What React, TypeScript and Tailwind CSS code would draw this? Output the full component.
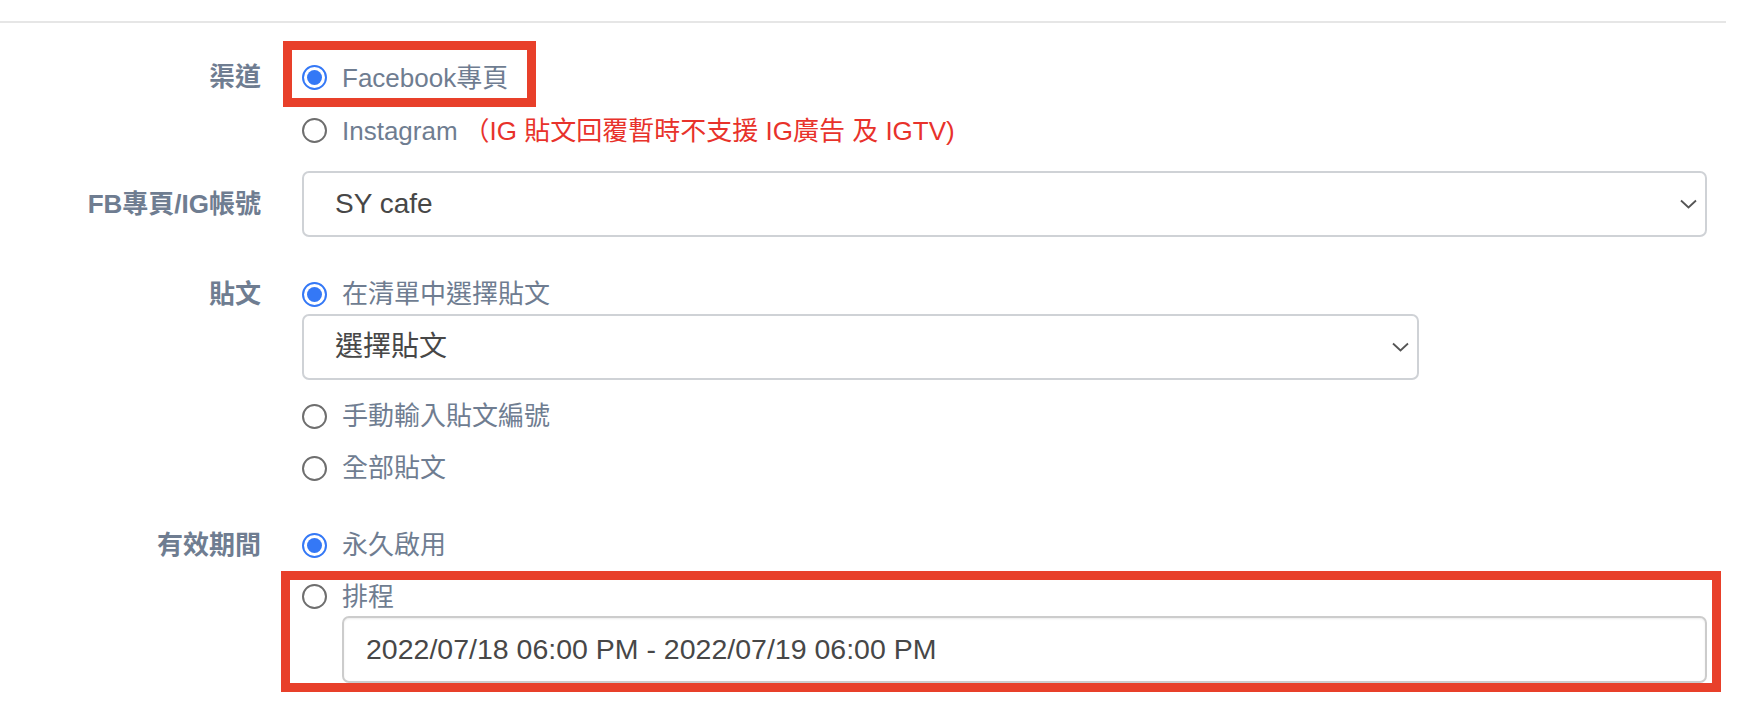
import React from 'react';

const FONT = { fontFamily: '"Liberation Sans", "Noto Sans CJK TC", sans-serif' };

const Radio: React.FC<{ checked?: boolean }> = ({ checked }) =>
  checked ? (
    <span className="flex items-center justify-center w-[25px] h-[25px] rounded-full border-[2px] border-[#3478f6] bg-white shrink-0">
      <span className="w-[15px] h-[15px] rounded-full bg-[#3478f6]" />
    </span>
  ) : (
    <span className="w-[25px] h-[25px] rounded-full border-[2px] border-[#6e6e6e] bg-white shrink-0" />
  );

const Option: React.FC<{ checked?: boolean; h: string; children: React.ReactNode }> = ({ checked, h, children }) => (
  <div className={`flex items-center gap-[15px] ${h}`}>
    <Radio checked={checked} />
    <span className="text-[26px] text-[#6f7d91] leading-none whitespace-nowrap">{children}</span>
  </div>
);

const Chevron = () => (
  <svg width="17" height="10" viewBox="0 0 17 10" fill="none" className="shrink-0">
    <path d="M1 1.5L8.5 8.5L16 1.5" stroke="#555" strokeWidth="1.8" />
  </svg>
);

const Select: React.FC<{ value: string; w: string }> = ({ value, w }) => (
  <div className={`flex items-center justify-between ${w} h-[66px] border-[2px] border-[#cfd2d6] rounded-[7px] bg-white pl-[31px] pr-[8px]`}>
    <span className="text-[28px] text-[#474747] leading-none">{value}</span>
    <Chevron />
  </div>
);

const Label: React.FC<{ h: string; children: React.ReactNode }> = ({ h, children }) => (
  <div className={`w-[261px] shrink-0 flex items-center justify-end ${h} text-[26px] font-bold text-[#6f7d91] whitespace-nowrap`}>
    {children}
  </div>
);

export default function App() {
  return (
    <div className="w-[1740px] h-[704px] bg-white overflow-hidden" style={FONT}>
      <div className="h-[23px] w-[1726px] border-b-[2px] border-[#e6e6e6]" />

      <div className="pt-[28px]">
        {/* 渠道 */}
        <div className="flex gap-[41px]">
          <Label h="h-[53px]">渠道</Label>
          <div className="flex flex-col">
            <div className="relative">
              <Option checked h="h-[53px]">Facebook專頁</Option>
              <div className="absolute -left-[19px] -top-[10px] w-[253px] h-[66px] border-[9px] border-[#e8402a]" />
            </div>
            <Option h="h-[53px]">
              Instagram
              <span className="text-[#e8322b] ml-[6px]">（IG 貼文回覆暫時不支援 IG廣告 及 IGTV)</span>
            </Option>
          </div>
        </div>

        {/* FB專頁/IG帳號 */}
        <div className="flex gap-[41px] mt-[14px]">
          <Label h="h-[66px]">FB專頁/IG帳號</Label>
          <Select value="SY cafe" w="w-[1405px]" />
        </div>

        {/* 貼文 */}
        <div className="flex gap-[41px] mt-[37px]">
          <Label h="h-[40px]">貼文</Label>
          <div className="flex flex-col">
            <Option checked h="h-[40px]">在清單中選擇貼文</Option>
            <Select value="選擇貼文" w="w-[1117px]" />
            <div className="mt-[10px]">
              <Option h="h-[52px]">手動輸入貼文編號</Option>
              <Option h="h-[52px]">全部貼文</Option>
            </div>
          </div>
        </div>

        {/* 有效期間 */}
        <div className="flex gap-[41px] mt-[24px]">
          <Label h="h-[54px]">有效期間</Label>
          <div className="flex flex-col">
            <Option checked h="h-[54px]">永久啟用</Option>
            <div className="relative mt-[5px]">
              <Option h="h-[39px]">排程</Option>
              <div className="ml-[40px] w-[1365px] h-[67px] flex items-center border-[2px] border-[#cccccc] rounded-[7px] bg-white pl-[22px] shadow-[inset_0_1px_2px_rgba(0,0,0,0.08)]">
                <span className="text-[28.5px] text-[#474747] leading-none whitespace-nowrap">
                  2022/07/18 06:00 PM - 2022/07/19 06:00 PM
                </span>
              </div>
              <div className="absolute -left-[21px] -top-[6px] w-[1440px] h-[121px] border-[9px] border-[#e8402a]" />
            </div>
          </div>
        </div>
      </div>
    </div>
  );
}
